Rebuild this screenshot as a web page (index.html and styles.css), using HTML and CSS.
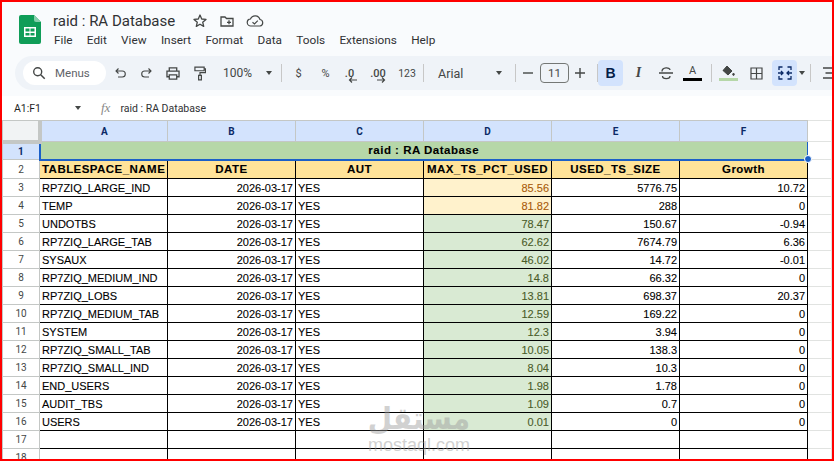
FILE: index.html
```html
<!DOCTYPE html>
<html lang="en">
<head>
<meta charset="utf-8">
<title>raid : RA Database</title>
<link rel="stylesheet" href="styles.css">
</head>
<body>
<div class="frame">
  <header class="top">
    <svg class="logo" width="22" height="29" viewBox="0 0 22 29"><path d="M2 0h13l7 7v20a2 2 0 0 1-2 2H2a2 2 0 0 1-2-2V2a2 2 0 0 1 2-2z" fill="#0f9d58"/><path d="M15 0l7 7h-5a2 2 0 0 1-2-2z" fill="#87ceac"/><path d="M5 12h12v10H5z" fill="#fff"/><path d="M6.500 13.500h4v3h-4zM11.500 13.500h4v3h-4zM6.500 18h4v2.500h-4zM11.500 18h4v2.500h-4z" fill="#0f9d58"/></svg>
    <div class="titles">
      <div class="title-row">
        <span class="doc-title">raid : RA Database</span>
        <svg class="title-icon" width="16" height="16" viewBox="0 0 16 16"><path d="M8 2l1.700 4 4.300.4-3.300 2.800 1 4.200L8 11.200l-3.700 2.200 1-4.200L2 6.400 6.300 6z" fill="none" stroke="#444746" stroke-width="1.300" stroke-linejoin="round"/></svg>
        <svg class="title-icon" width="16" height="16" viewBox="0 0 16 16"><path d="M2 4h4l1.500 1.500H14v7.500H2z M8 9.300h4M10 7.300v4" fill="none" stroke="#444746" stroke-width="1.300"/></svg>
        <svg class="title-icon" width="18" height="16" viewBox="0 0 18 16"><path d="M5 13a3.500 3.500 0 0 1-.5-7A5 5 0 0 1 14 6.500a3.300 3.300 0 0 1 0 6.500z M6.500 9.300l2 1.700 3.300-3.300" fill="none" stroke="#444746" stroke-width="1.200"/></svg>
      </div>
      <nav class="menu">
        <span>File</span><span>Edit</span><span>View</span><span>Insert</span><span>Format</span><span>Data</span><span>Tools</span><span>Extensions</span><span>Help</span>
      </nav>
    </div>
  </header>

  <div class="toolbar">
    <div class="search">
      <svg width="14" height="14" viewBox="0 0 14 14"><circle cx="5.700" cy="5.700" r="4" fill="none" stroke="#444746" stroke-width="1.400"/><path d="M8.700 8.700l4 4" stroke="#444746" stroke-width="1.500"/></svg>
      <span>Menus</span>
    </div>
    <span class="tb w26 first"><svg width="11" height="10" viewBox="0 0 11 10"><path d="M3.500.5L1 3l2.500 2.500M1.500 3h5.800a2.800 2.800 0 0 1 0 6H3" fill="none" stroke="#444746" stroke-width="1.100"/></svg></span>
    <span class="tb w26"><svg width="11" height="10" viewBox="0 0 11 10"><path d="M7.500.5L10 3 7.500 5.500M9.500 3H3.700a2.800 2.800 0 0 0 0 6H8" fill="none" stroke="#444746" stroke-width="1.100"/></svg></span>
    <span class="tb w28"><svg width="14" height="13" viewBox="0 0 15 14"><path d="M3.500 4V1h8v3M3.500 10.500H1V4.500h13v6h-2.500M3.500 8.500h8V13h-8z" fill="none" stroke="#444746" stroke-width="1.400"/></svg></span>
    <span class="tb w26"><svg width="12" height="15" viewBox="0 0 13 16"><path d="M1 1h10v4H1zM11 3h1.500v4H6.500v3M5 10h3v5H5z" fill="none" stroke="#444746" stroke-width="1.300"/></svg></span>
    <span class="tb zoom">100%</span>
    <span class="caret zoom-caret"></span>
    <span class="sep zoom-sep"></span>
    <span class="tb w27 fmt">$</span>
    <span class="tb w27 fmt">%</span>
    <span class="tb dec dec-less">.0<svg width="9" height="6" viewBox="0 0 9 6"><path d="M9 3H2M4 .5L1.500 3 4 5.500" fill="none" stroke="#444746" stroke-width="1.200"/></svg></span>
    <span class="tb dec dec-more">.00<svg width="9" height="6" viewBox="0 0 9 6"><path d="M0 3h7M5 .5L7.500 3 5 5.500" fill="none" stroke="#444746" stroke-width="1.200"/></svg></span>
    <span class="tb num">123</span>
    <span class="sep"></span>
    <span class="tb font-name">Arial</span>
    <span class="caret"></span>
    <span class="sep font-sep"></span>
    <span class="tb w24"><svg width="10" height="2" viewBox="0 0 10 2"><path d="M0 1h10" stroke="#444746" stroke-width="1.400"/></svg></span>
    <span class="size-box">11</span>
    <span class="tb w24"><svg width="10" height="10" viewBox="0 0 10 10"><path d="M0 5h10M5 0v10" stroke="#444746" stroke-width="1.400"/></svg></span>
    <span class="sep"></span>
    <span class="tb on bold">B</span>
    <span class="tb w27 italic">I</span>
    <span class="tb w27"><svg width="14" height="14" viewBox="0 0 14 14"><path d="M0 7h14M3 5.500C3 1 11 1 11 4M3.500 10c0 3.500 7.500 3.500 7.500 0" fill="none" stroke="#444746" stroke-width="1.300"/></svg></span>
    <span class="tb w27 under-wrap"><span class="a-glyph">A</span><span class="under black"></span></span>
    <span class="sep"></span>
    <span class="tb fill under-wrap"><svg width="15" height="12" viewBox="0 0 15 12"><path d="M6 1l5 5-4 4-5-4.500zM2 5.500h9M12.500 8c.9 1.300 1.300 2 0 2.500-1.300-.5-.9-1.200 0-2.500z" fill="#444746" stroke="#444746" stroke-width="1"/></svg><span class="under green"></span></span>
    <span class="tb w26 borders"><svg width="13" height="13" viewBox="0 0 13 13"><path d="M1 1h11v11H1zM6.500 1v11M1 6.500h11" fill="none" stroke="#444746" stroke-width="1.200"/></svg></span>
    <span class="tb on merge"><svg width="14" height="14" viewBox="0 0 14 14"><path d="M1 4V1h3.500M9.500 1H13v3M1 10v3h3.500M9.500 13H13v-3M0 7h4.500M3 5l2 2-2 2M14 7H9.500M11 5L9 7l2 2" fill="none" stroke="#0b2a66" stroke-width="1.300"/></svg></span>
    <span class="caret small"></span>
    <span class="sep"></span>
    <span class="tb w26"><svg width="13" height="12" viewBox="0 0 13 12"><path d="M0 1h13M2.500 6h8M0 11h13" fill="none" stroke="#444746" stroke-width="1.400"/></svg></span>
  </div>

  <div class="formula">
    <span class="range">A1:F1</span>
    <span class="caret range-caret"></span>
    <span class="fx">fx</span>
    <span class="formula-text">raid : RA Database</span>
  </div>

  <table class="sheet">
    <colgroup><col class="c-head"><col class="c-a"><col class="c-a"><col class="c-a"><col class="c-a"><col class="c-a"><col class="c-a"><col></colgroup>
    <thead>
      <tr class="cols"><th class="corner"></th><th>A</th><th>B</th><th>C</th><th>D</th><th>E</th><th>F</th><th class="blank"></th></tr>
    </thead>
    <tbody>
      <tr><th class="rh sel">1</th><td class="banner" colspan="6">raid : RA Database</td><td class="blank"></td></tr>
      <tr class="hdr"><th class="rh">2</th><td>TABLESPACE_NAME</td><td>DATE</td><td>AUT</td><td>MAX_TS_PCT_USED</td><td>USED_TS_SIZE</td><td>Growth</td><td class="blank"></td></tr>
      <tr><th class="rh">3</th><td>RP7ZIQ_LARGE_IND</td><td class="r">2026-03-17</td><td>YES</td><td class="r warn">85.56</td><td class="r">5776.75</td><td class="r">10.72</td><td class="blank"></td></tr>
      <tr><th class="rh">4</th><td>TEMP</td><td class="r">2026-03-17</td><td>YES</td><td class="r warn">81.82</td><td class="r">288</td><td class="r">0</td><td class="blank"></td></tr>
      <tr><th class="rh">5</th><td>UNDOTBS</td><td class="r">2026-03-17</td><td>YES</td><td class="r ok">78.47</td><td class="r">150.67</td><td class="r">-0.94</td><td class="blank"></td></tr>
      <tr><th class="rh">6</th><td>RP7ZIQ_LARGE_TAB</td><td class="r">2026-03-17</td><td>YES</td><td class="r ok">62.62</td><td class="r">7674.79</td><td class="r">6.36</td><td class="blank"></td></tr>
      <tr><th class="rh">7</th><td>SYSAUX</td><td class="r">2026-03-17</td><td>YES</td><td class="r ok">46.02</td><td class="r">14.72</td><td class="r">-0.01</td><td class="blank"></td></tr>
      <tr><th class="rh">8</th><td>RP7ZIQ_MEDIUM_IND</td><td class="r">2026-03-17</td><td>YES</td><td class="r ok">14.8</td><td class="r">66.32</td><td class="r">0</td><td class="blank"></td></tr>
      <tr><th class="rh">9</th><td>RP7ZIQ_LOBS</td><td class="r">2026-03-17</td><td>YES</td><td class="r ok">13.81</td><td class="r">698.37</td><td class="r">20.37</td><td class="blank"></td></tr>
      <tr><th class="rh">10</th><td>RP7ZIQ_MEDIUM_TAB</td><td class="r">2026-03-17</td><td>YES</td><td class="r ok">12.59</td><td class="r">169.22</td><td class="r">0</td><td class="blank"></td></tr>
      <tr><th class="rh">11</th><td>SYSTEM</td><td class="r">2026-03-17</td><td>YES</td><td class="r ok">12.3</td><td class="r">3.94</td><td class="r">0</td><td class="blank"></td></tr>
      <tr><th class="rh">12</th><td>RP7ZIQ_SMALL_TAB</td><td class="r">2026-03-17</td><td>YES</td><td class="r ok">10.05</td><td class="r">138.3</td><td class="r">0</td><td class="blank"></td></tr>
      <tr><th class="rh">13</th><td>RP7ZIQ_SMALL_IND</td><td class="r">2026-03-17</td><td>YES</td><td class="r ok">8.04</td><td class="r">10.3</td><td class="r">0</td><td class="blank"></td></tr>
      <tr><th class="rh">14</th><td>END_USERS</td><td class="r">2026-03-17</td><td>YES</td><td class="r ok">1.98</td><td class="r">1.78</td><td class="r">0</td><td class="blank"></td></tr>
      <tr><th class="rh">15</th><td>AUDIT_TBS</td><td class="r">2026-03-17</td><td>YES</td><td class="r ok">1.09</td><td class="r">0.7</td><td class="r">0</td><td class="blank"></td></tr>
      <tr><th class="rh">16</th><td>USERS</td><td class="r">2026-03-17</td><td>YES</td><td class="r ok">0.01</td><td class="r">0</td><td class="r">0</td><td class="blank"></td></tr>
      <tr><th class="rh">17</th><td></td><td></td><td></td><td></td><td></td><td></td><td class="blank"></td></tr>
      <tr><th class="rh">18</th><td></td><td></td><td></td><td></td><td></td><td></td><td class="blank"></td></tr>
    </tbody>
  </table>

  <span class="handle"></span>
  <div class="watermark" dir="ltr">
    <span class="wm-ar" lang="ar" dir="rtl">مستقل</span>
    <span class="wm-en">mostaql.com</span>
  </div>
</div>
</body>
</html>
```
FILE: styles.css
```css
* { box-sizing: border-box; }
html, body { margin: 0; padding: 0; background: #fff; }
.frame {
  position: relative;
  width: 834px;
  height: 461px;
  border: 2px solid #f00;
  overflow: hidden;
  background: #f9fbfd;
  font-family: Roboto, "Liberation Sans", sans-serif;
  color: #1f1f1f;
}
.top { display: flex; height: 54px; padding: 13px 0 0 17px; }
.logo { flex: none; }
.titles { margin-left: 12px; margin-top: -5px; }
.title-row { display: flex; align-items: center; height: 22px; }
.doc-title { font-size: 15px; color: #303134; width: 139px; white-space: nowrap; }
.title-icon { margin-right: 11px; }
.menu { display: flex; margin-left: 1px; font-size: 11.800px; line-height: 17px; color: #303134; }
.menu span { margin-right: 14.300px; }
.toolbar {
  display: flex;
  align-items: center;
  height: 34px;
  margin-left: 13px;
  padding-left: 8px;
  width: 830px;
  background: #eff3f8;
  border-radius: 17px 0 0 17px;
}
.search {
  display: flex; align-items: center;
  width: 83px; height: 24px; flex: none;
  padding-left: 9px;
  background: #fff; border-radius: 12px;
  font-size: 11.500px; color: #5f6368;
}
.search span { margin-left: 9px; }
.tb { display: flex; align-items: center; justify-content: center; flex: none; height: 26px; color: #444746; font-size: 11.500px; }
.first { margin-left: 1px; }
.w24 { width: 24px; } .w26 { width: 26px; } .w27 { width: 27px; } .w28 { width: 28px; }
.zoom { width: 39px; font-size: 12px; justify-content: flex-end; }
.caret { flex: none; width: 0; height: 0; margin-left: 9px; border: 3.500px solid transparent; border-top: 4px solid #444746; border-bottom: 0; }
.zoom-caret { margin-left: 14px; }
.caret.small { margin-left: 2px; }
.sep { flex: none; width: 1px; height: 18px; margin: 0 5px; background: #c7c7c7; }
.zoom-sep { margin-left: 9px; margin-right: 3px; }
.fmt { font-size: 11px; }
.dec { font-size: 11px; font-weight: 500; position: relative; }
.dec svg { position: absolute; bottom: 3px; right: 3px; }
.dec-less { width: 21px; }
.dec-more { width: 36px; }
.dec-more svg { right: 10px; }
.num { width: 22px; font-size: 10.500px; }
.font-name { width: 47px; justify-content: flex-start; padding-left: 9px; font-size: 12.500px; }
.font-name + .caret { margin-left: 20px; }
.font-sep { margin-left: 13px; margin-right: 0; }
.size-box { flex: none; width: 29px; height: 20px; border: 1px solid #747775; border-radius: 4px; display: flex; align-items: center; justify-content: center; font-size: 11.500px; color: #444746; margin: 0 -1px 0 0; }
.on { width: 25px; background: #d3e3fd; border-radius: 4px; color: #041e49; }
.bold { font-family: "Liberation Sans", sans-serif; font-weight: 700; font-size: 14px; margin: 0 2px 0 -5px; }
.italic { font-family: "Liberation Serif", serif; font-style: italic; font-weight: 700; font-size: 14px; }
.under-wrap { flex-direction: column; gap: 1px; }
.a-glyph { font-size: 11px; line-height: 12px; }
.under { display: block; height: 3px; width: 19px; }
.under.black { background: #000; }
.under.green { background: #b6d7a8; }
.fill { width: 22px; }
.borders { margin-left: 4px; }
.merge { margin-left: 3px; }
.formula { display: flex; align-items: center; height: 24px; margin-top: 6px; background: #fff; font-size: 10.500px; color: #1f1f1f; padding-left: 12px; }
.range { width: 61px; }
.range-caret { margin-left: 0; }
.fx { font-family: "Liberation Serif", serif; font-style: italic; font-size: 13px; color: #888; margin-left: 20px; }
.formula-text { margin-left: 10px; color: #303134; }
.sheet {
  table-layout: fixed;
  border-collapse: collapse;
  width: 830px;
  background: #fff;
  font-family: "Liberation Sans", Arial, sans-serif;
  font-size: 11px;
  color: #000;
}
.c-head { width: 37px; }
.c-a { width: 128px; }
.sheet th, .sheet td { height: 18px; padding: 0; white-space: nowrap; overflow: hidden; }
.cols th { height: 21px; background: #d3e3fd; border: 1px solid #c4c7c5; font-size: 10px; font-weight: 700; color: #0b2a66; font-family: Roboto, sans-serif; }
.sheet .corner { background: #f1f3f4; border-color: #c4c7c5; border-width: 1px 4px 4px 1px; }
.rh { background: #fff; border: 1px solid #c4c7c5; font-size: 10px; font-weight: 400; color: #444746; font-family: Roboto, sans-serif; }
.rh.sel { background: #d3e3fd; font-weight: 700; color: #0b2a66; }
.sheet td { border: 1px solid #000; padding: 0 2px 0 2px; -webkit-text-stroke: .1px currentColor; }
.banner { background: #b6d7a8; text-align: center; font-size: 11.500px; font-weight: 700; letter-spacing: .5px; }
.sheet td.banner { border: 1px solid #1a5fc8; border-width: 1px 1px 2px 2px; }
.sheet .hdr td { height: 19px; background: #ffe399; text-align: center; font-size: 11.500px; font-weight: 700; letter-spacing: .45px; }
.sheet .hdr .rh { height: 19px; }
.sheet .hdr td.blank, .sheet td.blank, .sheet th.blank { background: #fff; border: 1px solid #e1e3e1; }
.r { text-align: right; }
.warn { background: #fff2cc; color: #a85a08; }
.ok { background: #d9ead3; color: #4a5c28; }
.handle { position: absolute; left: 802px; top: 153px; width: 8px; height: 8px; border-radius: 50%; background: #1a5fc8; border: 1px solid #fff; }
.watermark { position: absolute; left: 365px; top: 402px; width: 104px; display: flex; flex-direction: column; align-items: center; color: #9a9a9a; opacity: .45; pointer-events: none; }
.wm-ar { font-family: "DejaVu Sans", sans-serif; font-weight: 700; font-size: 28px; line-height: 30px; transform: scale(1, 1.1); }
.wm-en { font-family: "Liberation Sans", sans-serif; font-size: 18px; line-height: 14px; margin-top: 4px; }
```
